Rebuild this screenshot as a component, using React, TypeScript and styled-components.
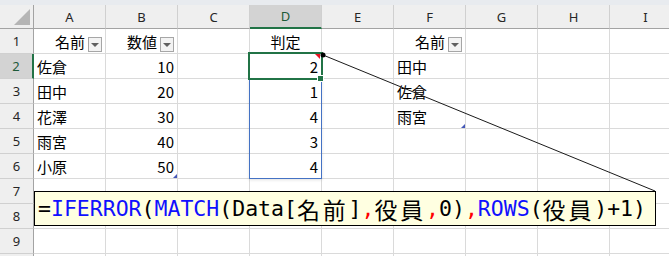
import styled, { createGlobalStyle } from 'styled-components'

const GlobalStyle = createGlobalStyle`
  html, body {
    margin: 0;
    padding: 0;
    background: #ffffff;
  }
  body {
    font-family: 'Noto Sans CJK JP', 'Noto Sans', sans-serif;
  }
`

const Sheet = styled.div`
  position: relative;
  width: 669px;
  height: 256px;
  overflow: hidden;
  background: #ffffff;
`

const TopStrip = styled.div`
  height: 5px;
  background: #e8ebef;
`

const Grid = styled.div`
  display: grid;
  grid-template-columns: 34px repeat(9, 72px);
  grid-template-rows: 24px;
  grid-auto-rows: 25px;
`

const Corner = styled.div`
  position: relative;
  box-sizing: border-box;
  background: #efefef;
  border-right: 1px solid #a3a3a3;
  border-bottom: 1px solid #a3a3a3;

  &::after {
    content: '';
    position: absolute;
    right: 3px;
    bottom: 3px;
    width: 0;
    height: 0;
    border-left: 16px solid transparent;
    border-bottom: 16px solid #b5b5b5;
  }
`

const ColHead = styled.div<{ $active?: boolean }>`
  box-sizing: border-box;
  display: flex;
  align-items: center;
  justify-content: center;
  background: ${(p) => (p.$active ? '#d3d3d3' : '#efefef')};
  border-right: 1px solid #d0d0d0;
  border-bottom: ${(p) => (p.$active ? '2px solid #217346' : '1px solid #a3a3a3')};
  font-family: 'Noto Sans', sans-serif;
  font-size: 13px;
  color: ${(p) => (p.$active ? '#1d5a38' : '#262626')};
`

const RowHead = styled.div<{ $active?: boolean }>`
  box-sizing: border-box;
  display: flex;
  align-items: center;
  justify-content: center;
  background: ${(p) => (p.$active ? '#d3d3d3' : '#efefef')};
  border-right: ${(p) => (p.$active ? '2px solid #217346' : '1px solid #a3a3a3')};
  border-bottom: 1px solid #d0d0d0;
  font-family: 'Noto Sans', sans-serif;
  font-size: 13px;
  color: ${(p) => (p.$active ? '#1d5a38' : '#262626')};
`

type Align = 'left' | 'right' | 'center'

const Cell = styled.div<{ $align?: Align; $tableEnd?: boolean }>`
  position: relative;
  box-sizing: border-box;
  display: flex;
  align-items: center;
  justify-content: ${(p) =>
    p.$align === 'right' ? 'flex-end' : p.$align === 'center' ? 'center' : 'flex-start'};
  padding: 0 3px;
  border-right: 1px solid #dadada;
  border-bottom: 1px solid #dadada;
  font-size: 15px;
  color: #000000;
  white-space: nowrap;

  ${(p) =>
    p.$tableEnd &&
    `
    &::after {
      content: '';
      position: absolute;
      right: 0;
      bottom: 0;
      width: 0;
      height: 0;
      border-left: 4px solid transparent;
      border-bottom: 4px solid #4558b8;
    }
  `}
`

const FilterButton = styled.span`
  box-sizing: border-box;
  align-self: flex-end;
  display: flex;
  align-items: center;
  justify-content: center;
  width: 14px;
  height: 15px;
  margin: 0 0 1px 3px;
  border: 1px solid #a6a6a6;
  background: #f3f3f3;

  &::before {
    content: '';
    width: 0;
    height: 0;
    border-left: 4px solid transparent;
    border-right: 4px solid transparent;
    border-top: 4px solid #606060;
  }
`

const SelectionFrame = styled.span`
  position: absolute;
  left: -2px;
  top: -2px;
  width: 75px;
  height: 28px;
  box-sizing: border-box;
  border: 2px solid #217346;
  z-index: 3;
`

const FillHandle = styled.span`
  position: absolute;
  left: 67px;
  top: 21px;
  width: 7px;
  height: 7px;
  box-sizing: border-box;
  background: #217346;
  border: 1px solid #ffffff;
  z-index: 4;
`

const CommentMark = styled.span`
  position: absolute;
  right: 1px;
  top: 0;
  width: 0;
  height: 0;
  border-left: 5px solid transparent;
  border-top: 5px solid #e81123;
  z-index: 4;
`

const RangeFrame = styled.div`
  position: absolute;
  left: 249px;
  top: 79px;
  width: 73px;
  height: 100px;
  box-sizing: border-box;
  border: 1px solid #4472c4;
  box-shadow: 0 1px 3px rgba(0, 0, 0, 0.12);
  z-index: 2;
`

const Leader = styled.svg`
  position: absolute;
  left: 0;
  top: 0;
  width: 669px;
  height: 256px;
  pointer-events: none;
  z-index: 5;
`

const CommentBox = styled.div`
  position: absolute;
  left: 34px;
  top: 191px;
  width: 622px;
  height: 35px;
  box-sizing: border-box;
  padding-left: 3px;
  display: flex;
  align-items: center;
  border: 1px solid #000000;
  background: #ffffe1;
  font-family: 'DejaVu Sans Mono', 'Liberation Mono', monospace;
  font-size: 21.5px;
  color: #000000;
  white-space: nowrap;
  z-index: 6;
`

const Fn = styled.span`
  color: #1010ff;
`

const Sep = styled.span`
  color: #ff0000;
`

const Wide = styled.span`
  font-family: 'Noto Sans CJK JP', sans-serif;
  font-size: 23px;
  letter-spacing: 2.8px;
`

type CellSpec = { text?: string; align?: Align; filter?: boolean; tableEnd?: boolean }

const columns = ['A', 'B', 'C', 'D', 'E', 'F', 'G', 'H', 'I']

const data: Record<string, CellSpec> = {
  A1: { text: '名前', align: 'right', filter: true },
  B1: { text: '数値', align: 'right', filter: true },
  D1: { text: '判定', align: 'center' },
  F1: { text: '名前', align: 'right', filter: true },
  A2: { text: '佐倉' },
  A3: { text: '田中' },
  A4: { text: '花澤' },
  A5: { text: '雨宮' },
  A6: { text: '小原' },
  B2: { text: '10', align: 'right' },
  B3: { text: '20', align: 'right' },
  B4: { text: '30', align: 'right' },
  B5: { text: '40', align: 'right' },
  B6: { text: '50', align: 'right', tableEnd: true },
  D2: { text: '2', align: 'right' },
  D3: { text: '1', align: 'right' },
  D4: { text: '4', align: 'right' },
  D5: { text: '3', align: 'right' },
  D6: { text: '4', align: 'right' },
  F2: { text: '田中' },
  F3: { text: '佐倉' },
  F4: { text: '雨宮', tableEnd: true },
}

// row 10 only peeks in at the bottom edge, its number is below the fold
const rows = [1, 2, 3, 4, 5, 6, 7, 8, 9, 10]

const App = () => {
  return (
    <>
      <GlobalStyle />
      <Sheet>
        <TopStrip />
        <Grid>
          <Corner />
          {columns.map((c) => (
            <ColHead key={c} $active={c === 'D'}>
              {c}
            </ColHead>
          ))}
          {rows.map((r) => [
            <RowHead key={`h${r}`} $active={r === 2}>
              {r < 10 ? r : null}
            </RowHead>,
            ...columns.map((c) => {
              const id = `${c}${r}`
              const spec = data[id] || {}
              return (
                <Cell key={id} $align={spec.align} $tableEnd={spec.tableEnd}>
                  {spec.text}
                  {spec.filter && <FilterButton />}
                  {id === 'D2' && (
                    <>
                      <SelectionFrame />
                      <FillHandle />
                      <CommentMark />
                    </>
                  )}
                </Cell>
              )
            }),
          ])}
        </Grid>
        <RangeFrame />
        <Leader viewBox='0 0 669 256'>
          <line x1={323} y1={55} x2={655} y2={191} stroke='#1a1a1a' strokeWidth={1} />
          <circle cx={323} cy={55} r={2.5} fill='#000000' />
        </Leader>
        <CommentBox>
          =<Fn>IFERROR</Fn>(<Fn>MATCH</Fn>(Data[<Wide>名前</Wide>]<Sep>,</Sep>
          <Wide>役員</Wide>
          <Sep>,</Sep>0)<Sep>,</Sep>
          <Fn>ROWS</Fn>(<Wide>役員</Wide>)+1)
        </CommentBox>
      </Sheet>
    </>
  )
}

export default App
